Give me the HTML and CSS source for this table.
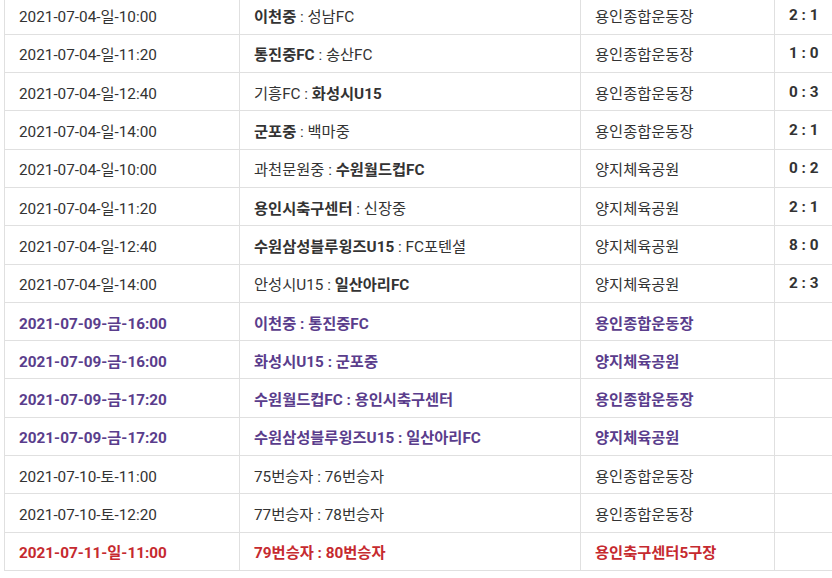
FILE: index.html
```html
<!DOCTYPE html>
<html lang="ko">
<head>
<meta charset="utf-8">
<link rel="stylesheet" href="styles.css">
</head>
<body>
<div class="wrap">
<table class="sched">
<tbody>
<tr><td>2021-07-04-일-10:00</td><td><b>이천중</b> : 성남FC</td><td>용인종합운동장</td><td class="sc">2 : 1</td></tr>
<tr><td>2021-07-04-일-11:20</td><td><b>통진중FC</b> : 송산FC</td><td>용인종합운동장</td><td class="sc">1 : 0</td></tr>
<tr><td>2021-07-04-일-12:40</td><td>기흥FC : <b>화성시U15</b></td><td>용인종합운동장</td><td class="sc">0 : 3</td></tr>
<tr><td>2021-07-04-일-14:00</td><td><b>군포중</b> : 백마중</td><td>용인종합운동장</td><td class="sc">2 : 1</td></tr>
<tr><td>2021-07-04-일-10:00</td><td>과천문원중 : <b>수원월드컵FC</b></td><td>양지체육공원</td><td class="sc">0 : 2</td></tr>
<tr><td>2021-07-04-일-11:20</td><td><b>용인시축구센터</b> : 신장중</td><td>양지체육공원</td><td class="sc">2 : 1</td></tr>
<tr><td>2021-07-04-일-12:40</td><td><b>수원삼성블루윙즈U15</b> : FC포텐셜</td><td>양지체육공원</td><td class="sc">8 : 0</td></tr>
<tr><td>2021-07-04-일-14:00</td><td>안성시U15 : <b>일산아리FC</b></td><td>양지체육공원</td><td class="sc">2 : 3</td></tr>
<tr class="pu"><td>2021-07-09-금-16:00</td><td>이천중 : 통진중FC</td><td>용인종합운동장</td><td class="sc"></td></tr>
<tr class="pu"><td>2021-07-09-금-16:00</td><td>화성시U15 : 군포중</td><td>양지체육공원</td><td class="sc"></td></tr>
<tr class="pu"><td>2021-07-09-금-17:20</td><td>수원월드컵FC : 용인시축구센터</td><td>용인종합운동장</td><td class="sc"></td></tr>
<tr class="pu"><td>2021-07-09-금-17:20</td><td>수원삼성블루윙즈U15 : 일산아리FC</td><td>양지체육공원</td><td class="sc"></td></tr>
<tr><td>2021-07-10-토-11:00</td><td>75번승자 : 76번승자</td><td>용인종합운동장</td><td class="sc"></td></tr>
<tr><td>2021-07-10-토-12:20</td><td>77번승자 : 78번승자</td><td>용인종합운동장</td><td class="sc"></td></tr>
<tr class="rd"><td>2021-07-11-일-11:00</td><td>79번승자 : 80번승자</td><td>용인축구센터5구장</td><td class="sc"></td></tr>
</tbody>
</table>
</div>
</body>
</html>
```

FILE: styles.css
```css
html, body {
  margin: 0;
  padding: 0;
  background: #fff;
  overflow: hidden;
}
body {
  font-family: Roboto, "Noto Sans CJK KR", sans-serif;
  font-size: 15.3px;
  color: #333;
}
.wrap {
  margin-top: -4.5px;
  padding-left: 4px;
}
.sched {
  border-collapse: collapse;
  table-layout: fixed;
  width: 828px;
}
.sched td {
  border: 1px solid #e0e0e0;
  height: 38.3px;
  box-sizing: border-box;
  padding: 0 0 0 14px;
  white-space: nowrap;
  vertical-align: middle;
}
.sched td:last-child { border-right: none; }
.sched td:nth-child(1) { width: 235px; }
.sched td:nth-child(2) { width: 341px; }
.sched td:nth-child(3) { width: 194px; }
.sched td:nth-child(4) { width: 58px; }
.sched b { font-weight: 700; }
.sc { font-weight: 700; }
.pu td { color: #5a3d8c; font-weight: 700; }
.rd td { color: #c62a2f; font-weight: 700; }
```
